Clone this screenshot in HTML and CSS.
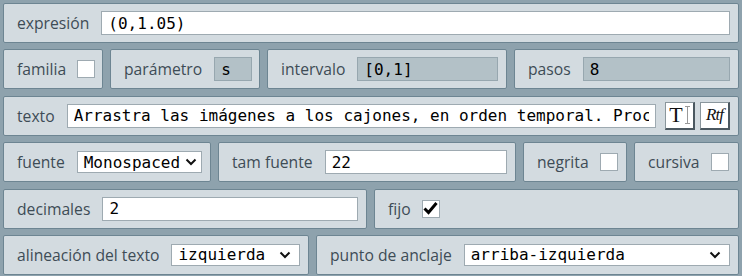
FILE: index.html
```html
<!DOCTYPE html>
<html lang="es">
<head>
  <meta charset="UTF-8">
  <title>Propiedades del texto</title>
  <link rel="stylesheet" href="styles.css">
</head>
<body>

<div class="panel-list">

  <div class="row">
    <div class="field grow">
      <span class="label">expresión</span>
      <input class="entry" type="text" value="(0,1.05)">
    </div>
  </div>

  <div class="row">
    <div class="field w-familia">
      <span class="label">familia</span>
      <span class="check"></span>
    </div>
    <div class="field w-parametro">
      <span class="label">parámetro</span>
      <input class="entry disabled w-small" type="text" value="s" disabled>
    </div>
    <div class="field w-intervalo">
      <span class="label">intervalo</span>
      <input class="entry disabled" type="text" value="[0,1]" disabled>
    </div>
    <div class="field grow">
      <span class="label">pasos</span>
      <input class="entry disabled" type="text" value="8" disabled>
    </div>
  </div>

  <div class="row">
    <div class="field grow">
      <span class="label">texto</span>
      <input class="entry" type="text" value="Arrastra las imágenes a los cajones, en orden temporal. Proceda">
      <div class="tools">
        <button class="tool-btn"><span class="t-big">T</span><span class="t-cursor"></span></button>
        <button class="tool-btn"><span class="rtf">Rtf</span></button>
      </div>
    </div>
  </div>

  <div class="row">
    <div class="field w-fuente">
      <span class="label">fuente</span>
      <div class="select w-fuente-sel">
        <span>Monospaced</span>
        <svg class="chevron" width="12" height="8" viewBox="0 0 12 8"><path d="M1.5 1.5 L6 6 L10.5 1.5" fill="none" stroke="#111" stroke-width="2"/></svg>
      </div>
    </div>
    <div class="field w-tam">
      <span class="label">tam fuente</span>
      <input class="entry" type="text" value="22">
    </div>
    <div class="field w-negrita">
      <span class="label">negrita</span>
      <span class="check"></span>
    </div>
    <div class="field grow">
      <span class="label">cursiva</span>
      <span class="check"></span>
    </div>
  </div>

  <div class="row">
    <div class="field w-decimales">
      <span class="label">decimales</span>
      <input class="entry" type="text" value="2">
    </div>
    <div class="field grow">
      <span class="label">fijo</span>
      <span class="check">
        <svg width="17" height="17" viewBox="0 0 17 17"><path d="M2.5 8.5 L6.5 12.5 L14.5 3" fill="none" stroke="#000" stroke-width="3"/></svg>
      </span>
    </div>
  </div>

  <div class="row">
    <div class="field w-alineacion">
      <span class="label">alineación del texto</span>
      <div class="select grow">
        <span>izquierda</span>
        <svg class="chevron" width="12" height="8" viewBox="0 0 12 8"><path d="M1.5 1.5 L6 6 L10.5 1.5" fill="none" stroke="#111" stroke-width="2"/></svg>
      </div>
    </div>
    <div class="field grow">
      <span class="label">punto de anclaje</span>
      <div class="select grow">
        <span>arriba-izquierda</span>
        <svg class="chevron" width="12" height="8" viewBox="0 0 12 8"><path d="M1.5 1.5 L6 6 L10.5 1.5" fill="none" stroke="#111" stroke-width="2"/></svg>
      </div>
    </div>
  </div>

</div>

</body>
</html>
```

FILE: styles.css
```css
body {
  margin: 0;
  padding: 0;
  background-color: #8ea2ad;
  font-family: 'Open Sans', 'Noto Sans', sans-serif;
}

/* Panel rows */
.panel-list {
  display: flex;
  flex-direction: column;
  gap: 6.4px;
  padding: 3px;
  width: 736px;
}

.row {
  display: flex;
  gap: 7px;
  height: 40px;
}

.field {
  display: flex;
  align-items: center;
  gap: 12px;
  box-sizing: border-box;
  height: 40px;
  padding: 0 8px 0 13px;
  background-color: #d3dbe0;
  border: 1px solid #6d8592;
  border-radius: 2px;
  flex-shrink: 0;
}

.grow {
  flex: 1;
  min-width: 0;
}

.w-familia { width: 100px; }
.w-parametro { width: 150px; }
.w-intervalo { width: 240px; }
.w-fuente { width: 208px; }
.w-tam { width: 298px; }
.w-negrita { width: 104px; }
.w-decimales { width: 364px; }
.w-alineacion { width: 306px; }

.label {
  font-size: 15.7px;
  color: #3e4c56;
  white-space: nowrap;
  line-height: 20px;
}

/* Inputs */
.entry {
  flex: 1;
  min-width: 0;
  box-sizing: border-box;
  height: 24px;
  margin: 0;
  padding: 0 6px;
  border: 1px solid #9eaab1;
  background-color: #fff;
  font-family: 'DejaVu Sans Mono', monospace;
  font-size: 16px;
  color: #000;
  outline: none;
}

.entry.disabled {
  background-color: #b3c1c7;
  border-color: #97a7af;
  color: #000;
}

.entry.w-small {
  flex: 0 0 38px;
}

.check {
  display: block;
  box-sizing: border-box;
  width: 18px;
  height: 18px;
  margin-left: -1px;
  background-color: #fff;
  border: 1px solid #9eaab1;
  flex-shrink: 0;
}

.check svg {
  display: block;
  margin: -1px 0 0 -1px;
}

.select {
  display: flex;
  align-items: center;
  justify-content: space-between;
  box-sizing: border-box;
  height: 22px;
  padding: 0 8px 0 6px;
  border: 1px solid #9eaab1;
  background-color: #fff;
  font-family: 'DejaVu Sans Mono', monospace;
  font-size: 16px;
  color: #000;
}

.w-fuente-sel {
  width: 126px;
  padding-right: 4px;
}

/* Text tools */
.tools {
  display: flex;
  gap: 5px;
  margin-left: -3px;
}

.tool-btn {
  display: flex;
  align-items: center;
  justify-content: center;
  box-sizing: border-box;
  width: 30px;
  height: 28px;
  padding: 0;
  background-color: #fff;
  border: 1px solid #8a969c;
  border-right: 2px solid #4b5860;
  border-bottom: 2px solid #4b5860;
}

.t-big {
  font-family: 'Liberation Serif', serif;
  font-size: 22px;
  line-height: 22px;
  color: #111;
}

.t-cursor {
  width: 5px;
  height: 18px;
  margin-left: 2px;
  border-top: 1px solid #999;
  border-bottom: 1px solid #999;
  box-sizing: border-box;
  background: linear-gradient(#999, #999) center / 1px 100% no-repeat;
}

.rtf {
  font-family: 'Liberation Serif', serif;
  font-style: italic;
  font-size: 17px;
  color: #111;
  letter-spacing: -1px;
}

.chevron {
  flex-shrink: 0;
}
```
